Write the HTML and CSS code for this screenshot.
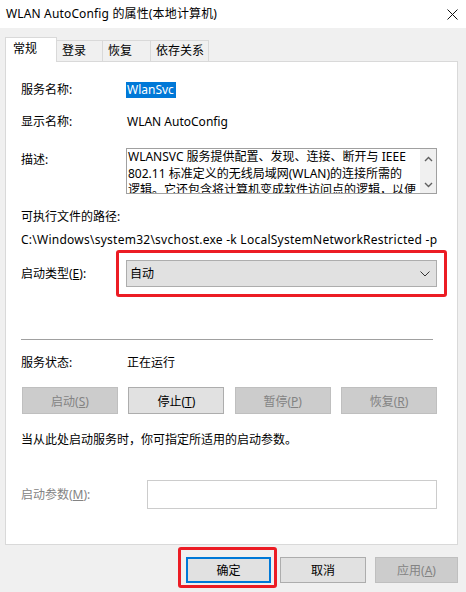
FILE: index.html
```html
<!DOCTYPE html>
<html lang="zh-CN">
<head>
<meta charset="utf-8">
<title>WLAN AutoConfig 的属性(本地计算机)</title>
<link rel="stylesheet" href="styles.css">
</head>
<body>
<div class="window">
  <div class="titlebar">
    <span class="title">WLAN AutoConfig 的属性(本地计算机)</span>
    <svg class="close" width="11" height="11" viewBox="0 0 11 11"><path d="M0.5 0.5 L10.5 10.5 M10.5 0.5 L0.5 10.5" stroke="#111" stroke-width="1" fill="none"/></svg>
  </div>
  <div class="tabs">
    <div class="tab active t1">常规</div>
    <div class="tab t2">登录</div>
    <div class="tab t3">恢复</div>
    <div class="tab t4">依存关系</div>
  </div>
  <div class="panel">
    <div class="row r-name"><span class="lbl">服务名称:</span><span class="val"><span class="sel">WlanSvc</span></span></div>
    <div class="row r-disp"><span class="lbl">显示名称:</span><span class="val">WLAN AutoConfig</span></div>
    <div class="row r-desc">
      <span class="lbl lbl-top">描述:</span>
      <div class="descbox">
        <div class="desctext">WLANSVC 服务提供配置、发现、连接、断开与 IEEE<br>802.11 标准定义的无线局域网(WLAN)的连接所需的<br>逻辑。它还包含将计算机变成软件访问点的逻辑，以便其他设备或计算机可以使用支持它的 WLAN 适配器无线连接到计算机。</div>
        <div class="vscroll">
          <svg width="9" height="6" viewBox="0 0 9 6"><path d="M1 5 L4.5 1.5 L8 5" stroke="#606060" stroke-width="1.4" fill="none"/></svg>
          <svg width="9" height="6" viewBox="0 0 9 6"><path d="M1 1 L4.5 4.5 L8 1" stroke="#606060" stroke-width="1.4" fill="none"/></svg>
        </div>
      </div>
    </div>
    <div class="line r-pathlbl">可执行文件的路径:</div>
    <div class="line r-path">C:\Windows\system32\svchost.exe -k LocalSystemNetworkRestricted -p</div>
    <div class="row r-start">
      <span class="lbl">启动类型(<u>E</u>):</span>
      <div class="combo mark">
        <span>自动</span>
        <svg width="10" height="6" viewBox="0 0 10 6"><path d="M0.5 0.5 L5 5 L9.5 0.5" stroke="#333" stroke-width="1" fill="none"/></svg>
      </div>
    </div>
    <div class="sep"></div>
    <div class="row r-status"><span class="lbl">服务状态:</span><span class="val">正在运行</span></div>
    <div class="btnrow">
      <button class="btn disabled">启动(<u>S</u>)</button>
      <button class="btn">停止(<u>T</u>)</button>
      <button class="btn disabled">暂停(<u>P</u>)</button>
      <button class="btn disabled">恢复(<u>R</u>)</button>
    </div>
    <div class="line r-hint">当从此处启动服务时，你可指定所适用的启动参数。</div>
    <div class="row r-param">
      <span class="lbl dim">启动参数(<u>M</u>):</span>
      <div class="input"></div>
    </div>
  </div>
  <div class="footer">
    <button class="btn fbtn ok mark2">确定</button>
    <button class="btn fbtn cancel">取消</button>
    <button class="btn fbtn apply disabled">应用(<u>A</u>)</button>
  </div>
</div>
</body>
</html>
```
FILE: styles.css
```css
html, body {
  margin: 0;
  padding: 0;
}
body {
  width: 466px;
  height: 592px;
  overflow: hidden;
  background: #f0f0f0;
  font-family: "Noto Sans", "Noto Sans CJK SC", sans-serif;
  font-size: 12px;
  color: #000;
}
.window {
  display: flex;
  flex-direction: column;
  height: 592px;
}
.titlebar {
  height: 28px;
  background: #fff;
  display: flex;
  align-items: center;
  justify-content: space-between;
  padding: 0 8px 0 6px;
  box-sizing: border-box;
}
.title {
  font-size: 12px;
  line-height: 16px;
  letter-spacing: 0.15px;
}
.tabs {
  height: 33px;
  display: flex;
  align-items: flex-end;
  padding-left: 5px;
  box-sizing: border-box;
  position: relative;
  z-index: 2;
}
.tab {
  height: 21px;
  box-sizing: border-box;
  border: 1px solid #d9d9d9;
  border-bottom: none;
  background: #f0f0f0;
  line-height: 20px;
  padding-left: 5px;
  margin-left: -1px;
}
.tab.t1 { width: 52px; margin-left: 0; }
.tab.t2 { width: 47px; }
.tab.t3 { width: 49px; }
.tab.t4 { width: 59px; }
.tab.active {
  height: 25px;
  background: #fff;
  margin-bottom: -1px;
  padding-left: 7px;
  line-height: 22px;
  position: relative;
  z-index: 3;
}
.panel {
  margin: 0 8px 0 5px;
  height: 484px;
  box-sizing: border-box;
  border: 1px solid #d9d9d9;
  background: #fff;
  padding: 0 20px 0 15px;
  position: relative;
  z-index: 1;
}
.row {
  display: grid;
  grid-template-columns: 106px 1fr;
  align-items: center;
  line-height: 16px;
}
.line {
  line-height: 16px;
  white-space: nowrap;
}
.r-name { margin-top: 20px; }
.r-disp { margin-top: 16px; }
.r-desc { margin-top: 18px; align-items: start; }
.lbl-top { padding-top: 4px; }
.sel {
  background: #0078d7;
  color: #fff;
  padding: 0 2px 0 1px;
  display: inline-block;
  margin-left: -1px;
}
.descbox {
  height: 46px;
  box-sizing: border-box;
  border: 1px solid #a0a0a0;
  display: flex;
  overflow: hidden;
  margin-left: -1px;
}
.desctext {
  flex: 1;
  min-width: 0;
  padding-left: 1px;
  line-height: 16.5px;
  overflow: hidden;
}
.vscroll {
  flex: none;
  width: 16px;
  background: #f0f0f0;
  display: flex;
  flex-direction: column;
  justify-content: space-between;
  align-items: center;
  padding: 7px 0 5px;
  box-sizing: border-box;
}
.r-pathlbl { margin-top: 15px; }
.r-path { margin-top: 7px; letter-spacing: 0.25px; }
.r-start { margin-top: 12px; }
.combo {
  height: 27px;
  box-sizing: border-box;
  border: 1px solid #adadad;
  background: #e1e1e1;
  display: flex;
  align-items: center;
  justify-content: space-between;
  padding: 0 6px 0 3px;
  margin-left: -1px;
  position: relative;
}
.mark::after {
  content: "";
  position: absolute;
  left: -11px;
  right: -11px;
  top: -11px;
  bottom: -11px;
  border: 3px solid #ec1c24;
  border-radius: 3px;
}
.sep {
  margin-top: 52px;
  margin-right: 4px;
  height: 1px;
  background: #a0a0a0;
}
.r-status { margin-top: 15px; }
.btnrow {
  margin-top: 16px;
  display: flex;
  justify-content: space-between;
  padding-left: 1px;
}
.btn {
  width: 96px;
  height: 27px;
  box-sizing: border-box;
  border: 1px solid #adadad;
  background: #e1e1e1;
  font-family: inherit;
  font-size: 12px;
  color: #000;
  padding: 0;
  margin: 0;
}
.btn.disabled {
  background: #cccccc;
  border-color: #bfbfbf;
  color: #838383;
}
.r-hint { margin-top: 18px; }
.r-param {
  margin-top: 32px;
  grid-template-columns: 126px 1fr;
}
.dim { color: #838383; }
.input {
  height: 29px;
  box-sizing: border-box;
  border: 1px solid #cccccc;
  background: #fff;
}
.footer {
  margin-top: 12px;
  display: flex;
  justify-content: flex-end;
  gap: 9px;
  padding-right: 8px;
}
.fbtn { height: 26px; }
.ok { width: 85px; border: 2px solid #0078d7; position: relative; }
.cancel { width: 86px; }
.apply { width: 83px; }
.mark2::after {
  content: "";
  position: absolute;
  left: -10px;
  right: -8px;
  top: -12px;
  bottom: -7px;
  border: 3px solid #ec1c24;
  border-radius: 3px;
}
```
